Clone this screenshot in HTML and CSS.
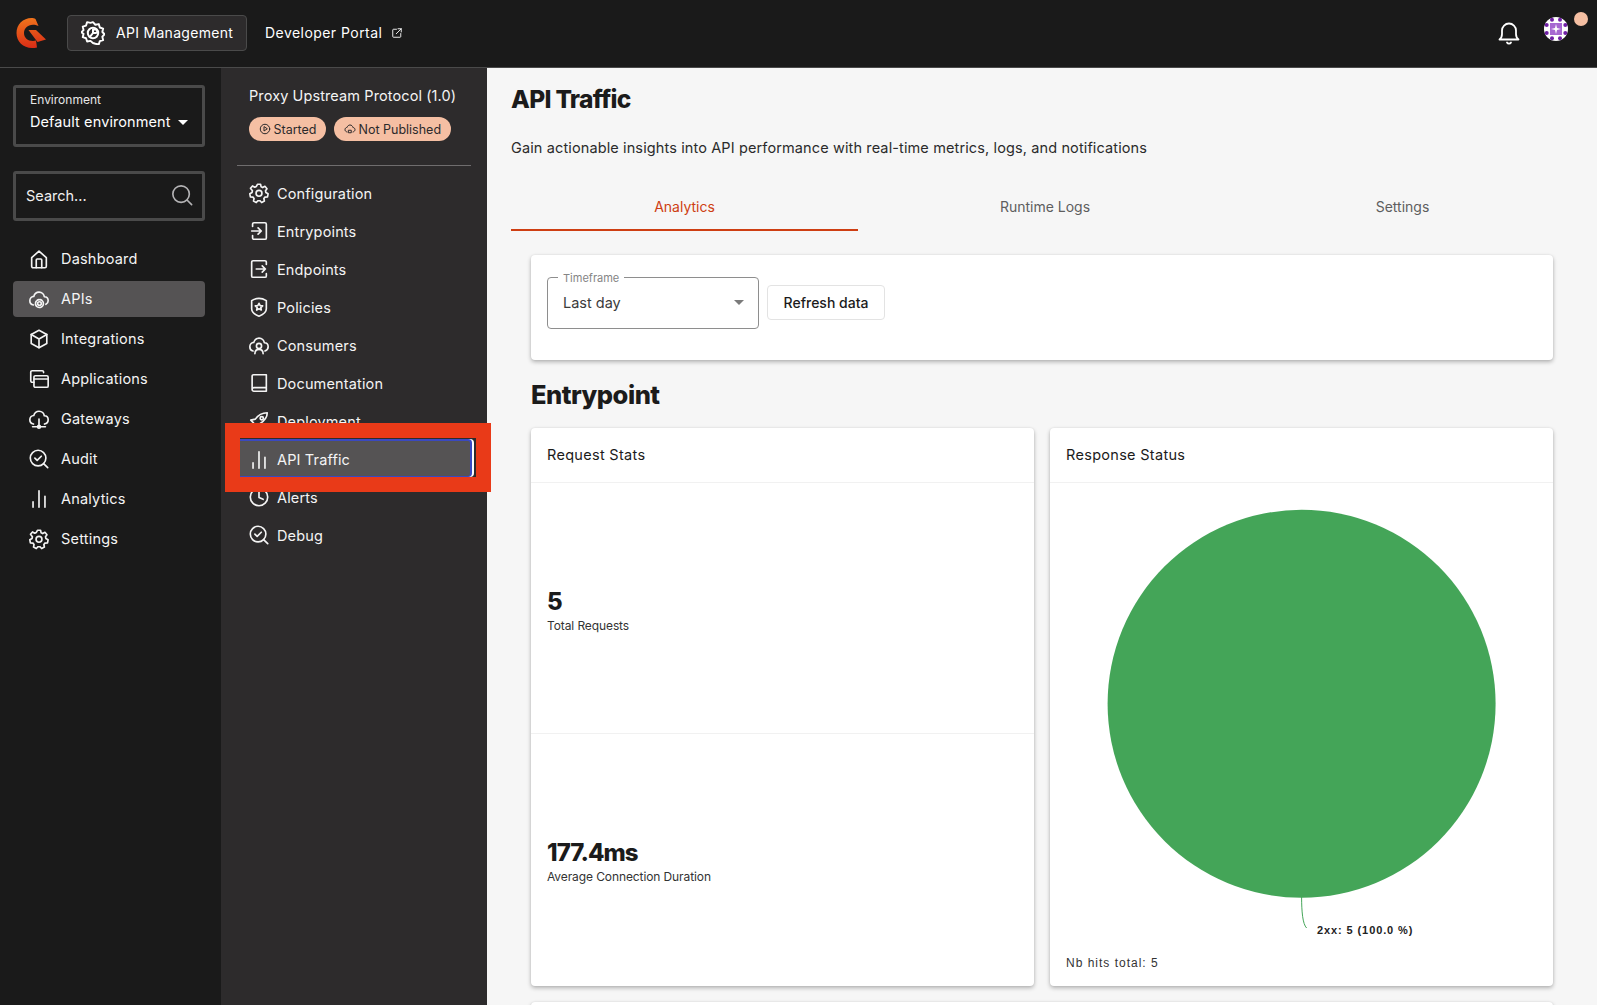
FILE: index.html
```html
<!DOCTYPE html>
<html lang="en">
<head>
<meta charset="utf-8">
<title>API Traffic</title>
<link rel="stylesheet" href="styles.css">
</head>
<body>
<svg class="defs" width="0" height="0" aria-hidden="true">
  <defs>
    <linearGradient id="logo-grad" x1="0.4" y1="0" x2="0.5" y2="1">
      <stop offset="0" stop-color="#f0741c"/>
      <stop offset="1" stop-color="#d92c16"/>
    </linearGradient>
    <symbol id="i-gear" viewBox="0 0 24 24"><path d="M10.300 2.500h3.400l.6 2.800 1.700.8 2.500-1.400 2.200 2.600-1.600 2.300.4 1.900 2.400 1.400-.6 3.300-2.800.3-1.200 1.500.6 2.800-3 1.600-2-2h-1.900l-2 2-3-1.600.6-2.800-1.200-1.500-2.800-.3-.6-3.300 2.400-1.400.4-1.900L2.700 6.900l2.200-2.600 2.500 1.400 1.700-.8z"/><circle cx="12" cy="12.300" r="3.200"/></symbol>
    <symbol id="i-gear-app" viewBox="0 0 24 24"><path d="M12 1.500l2.500 2.700 3.500-.7 1.100 3.500 3.400 1.100-.8 3.600 2.300 2.300-2.300 2.500.8 3.500-3.400 1.100-1.100 3.400-3.500-.7L12 23l-2.500-2.200-3.500.7-1.100-3.400-3.400-1.100.8-3.500L0 12l2.300-2.300-.8-3.600 3.400-1.100L6 1.500l3.500.7z" transform="translate(.3 -.3) scale(.97)"/><circle cx="12" cy="12" r="5.200"/><path d="M12 12V8.500h2.500a1.700 1.700 0 0 1 0 3.500zM12 12l-2.500 3.200"/></symbol>
    <symbol id="i-home" viewBox="0 0 24 24"><path d="M4 10.500 12 3.500l8 7V20a1.500 1.500 0 0 1-1.500 1.500h-13A1.500 1.500 0 0 1 4 20z"/><path d="M9 21.500V13a1 1 0 0 1 1-1h4a1 1 0 0 1 1 1v8.500"/></symbol>
    <symbol id="i-cloud-gear" viewBox="0 0 24 24"><path d="M6 18.500C3.500 18 2 16 2 13.800 2 11 4.200 9.300 6.300 9.200 7.200 6 9.500 4.500 12 4.500c3.300 0 5.500 2.500 5.800 5 2.500.1 4.200 2 4.200 4.300 0 1.800-1 3.200-2.500 4"/><circle cx="12.500" cy="17" r="2"/><circle cx="12.500" cy="17" r="4.300" stroke-dasharray="2.200 1.200"/></symbol>
    <symbol id="i-box" viewBox="0 0 24 24"><path d="M12 2.500 20.500 7v10L12 21.500 3.500 17V7z"/><path d="M3.500 7 12 12l8.500-5M12 12v9.500"/></symbol>
    <symbol id="i-windows" viewBox="0 0 24 24"><rect x="6.500" y="8.500" width="15.500" height="12.500" rx="1.500"/><path d="M17 5V4.500A1.500 1.500 0 0 0 15.500 3h-11A1.500 1.500 0 0 0 3 4.500V14a1.500 1.500 0 0 0 1.500 1.500h2M6.500 12H22"/></symbol>
    <symbol id="i-cloud-net" viewBox="0 0 24 24"><path d="M6 17.500C3.500 17 2 15 2 12.800 2 10 4.200 8.300 6.300 8.200 7.200 5 9.500 3.500 12 3.500c3.300 0 5.500 2.500 5.800 5 2.500.1 4.200 2 4.200 4.300 0 2-1.500 4.200-4 4.700"/><path d="M12 12v6M5 20.500h14"/><circle cx="12" cy="20.500" r="1.500"/></symbol>
    <symbol id="i-audit" viewBox="0 0 24 24"><circle cx="11" cy="11" r="8.500"/><path d="m7.500 11 2.500 2.500 4.500-4.500M17 17l4.500 4.500"/></symbol>
    <symbol id="i-bars" viewBox="0 0 24 24"><path d="M5.500 21v-6M12 21V3M18.500 21V9"/></symbol>
    <symbol id="i-entry" viewBox="0 0 24 24"><path d="M5 7V4.500A1.500 1.500 0 0 1 6.500 3h12A1.500 1.500 0 0 1 20 4.500v15a1.500 1.500 0 0 1-1.500 1.500h-12A1.500 1.500 0 0 1 5 19.500V17"/><path d="M4 12h10M11 8.500l3.500 3.500-3.500 3.500"/></symbol>
    <symbol id="i-end" viewBox="0 0 24 24"><path d="M20 7V4.500A1.500 1.500 0 0 0 18.500 3h-13A1.500 1.500 0 0 0 4 4.500v15A1.500 1.500 0 0 0 5.500 21h13a1.500 1.500 0 0 0 1.500-1.500V17"/><path d="M9 12h10M15.500 8.500 19 12l-3.500 3.500"/></symbol>
    <symbol id="i-shield" viewBox="0 0 24 24"><path d="M4 5c5-3 11-3 16 0v9c0 4-4 6.500-8 8-4-1.500-8-4-8-8z"/><path d="m12 8 1.300 2.500 2.700.3-2 1.800.5 2.700-2.500-1.300-2.500 1.300.5-2.700-2-1.800 2.700-.3z"/></symbol>
    <symbol id="i-cloud-user" viewBox="0 0 24 24"><path d="M5.500 18.500C3.300 18 2 16 2 13.800 2 11 4.200 9.300 6.300 9.200 7.200 6 9.500 4.500 12 4.500c3.300 0 5.500 2.500 5.800 5 2.500.1 4.200 2 4.200 4.300 0 2-1.200 3.800-3.500 4.700"/><circle cx="12" cy="13" r="2.800"/><path d="M7.500 21.500c0-3 1.800-4.800 4.500-4.800s4.500 1.800 4.500 4.800"/></symbol>
    <symbol id="i-book" viewBox="0 0 24 24"><path d="M4.500 19V4.500A1.500 1.500 0 0 1 6 3h14v18H6.500a2 2 0 0 1-2-2 2 2 0 0 1 2-2H20"/></symbol>
    <symbol id="i-rocket" viewBox="0 0 24 24"><path d="M21 3c-6 0-10 2.500-13 7l-5 1 3 3-1 4 4-1 3 3 1-5c4.500-3 8-7 8-12z"/><circle cx="15" cy="9" r="1.800"/></symbol>
    <symbol id="i-clock" viewBox="0 0 24 24"><circle cx="12" cy="12" r="9.500"/><path d="M12 6v6.500l4.500 2"/></symbol>
    <symbol id="i-search" viewBox="0 0 24 24"><circle cx="11" cy="11" r="9"/><path d="m18 18 4.500 4.500"/></symbol>
    <symbol id="i-play" viewBox="0 0 24 24"><circle cx="12" cy="12" r="9.500"/><path d="M10 8v8l6-4z"/></symbol>
    <symbol id="i-cloud-off" viewBox="0 0 24 24"><path d="M6 18C3.500 17.500 2 15.500 2 13.300 2 10.500 4.200 8.800 6.300 8.700 7.200 5.500 9.500 4 12 4c3.300 0 5.500 2.500 5.800 5 2.500.1 4.200 2 4.200 4.300 0 2-1.500 4.200-4 4.700"/><path class="fill" d="M9.500 14.500h5v5h-5z"/></symbol>
    <symbol id="i-ext" viewBox="0 0 24 24"><path d="M11 4.500H5A1.500 1.500 0 0 0 3.500 6v13A1.500 1.500 0 0 0 5 20.500h13a1.500 1.500 0 0 0 1.500-1.500v-6M10.500 13.500 20.500 3.500M14 3.500h6.500V10"/></symbol>
    <symbol id="i-bell" viewBox="0 0 24 24"><path d="M2.500 18.500c2-1.500 2.500-3 2.500-5.500V9.500a7 7 0 0 1 14 0V13c0 2.500.5 4 2.500 5.500z"/><path d="M10 21.500a2.300 2.300 0 0 0 4 0"/></symbol>
  </defs>
</svg>

<header class="topbar">
  <svg class="logo" viewBox="0 0 30 30" aria-hidden="true"><path fill="url(#logo-grad)" d="M19.500 1 22.500 8C20.500 7 19 6.700 17 6.700 11.500 6.700 8 10.500 8 15c0 4.500 3.500 8 9 8 1 0 2-.1 3-.4l1 6.900c-1.500.4-3 .5-5 .5C7 30 .5 23.500.5 15S7 0 15.500 0c1.500 0 3 .4 4 1zM12.500 12H20l10 9.500-8.500 2.500z"/></svg>
  <div class="product">
    <svg class="ico ico-24 app-gear"><use href="#i-gear-app"/></svg>
    <span>API Management</span>
  </div>
  <div class="portal">
    <span>Developer Portal</span>
    <svg class="ico ico-12"><use href="#i-ext"/></svg>
  </div>
  <div class="top-right">
    <svg class="ico ico-24 bell"><use href="#i-bell"/></svg>
    <svg class="avatar" viewBox="0 0 24 24" aria-hidden="true">
      <circle cx="12" cy="12" r="12" fill="#fff"/>
      <rect x="6" y="6" width="12" height="12" fill="#a667d1"/>
      <g fill="#6f1fa5"><circle cx="8" cy="2.700" r="2"/><circle cx="16" cy="2.700" r="2"/><circle cx="8" cy="21.300" r="2"/><circle cx="16" cy="21.300" r="2"/><circle cx="2.700" cy="8" r="2"/><circle cx="2.700" cy="16" r="2"/><circle cx="21.300" cy="8" r="2"/><circle cx="21.300" cy="16" r="2"/></g>
      <path fill="#fff" d="M12 7l1 4 4 1-4 1-1 4-1-4-4-1 4-1z"/>
    </svg>
    <span class="dot"></span>
  </div>
</header>

<div class="shell">
  <nav class="side">
    <div class="box env">
      <div class="env-label">Environment</div>
      <div class="env-value"><span>Default environment</span><i class="caret caret-white"></i></div>
    </div>
    <div class="box search">
      <span>Search...</span>
      <svg class="ico ico-22 muted"><use href="#i-search"/></svg>
    </div>
    <ul class="side-list">
      <li class="side-item"><svg class="ico ico-22"><use href="#i-home"/></svg>Dashboard</li>
      <li class="side-item is-active"><svg class="ico ico-22"><use href="#i-cloud-gear"/></svg>APIs</li>
      <li class="side-item"><svg class="ico ico-22"><use href="#i-box"/></svg>Integrations</li>
      <li class="side-item"><svg class="ico ico-22"><use href="#i-windows"/></svg>Applications</li>
      <li class="side-item"><svg class="ico ico-22"><use href="#i-cloud-net"/></svg>Gateways</li>
      <li class="side-item"><svg class="ico ico-22"><use href="#i-audit"/></svg>Audit</li>
      <li class="side-item"><svg class="ico ico-22"><use href="#i-bars"/></svg>Analytics</li>
      <li class="side-item"><svg class="ico ico-22"><use href="#i-gear"/></svg>Settings</li>
    </ul>
  </nav>

  <aside class="sub">
    <div class="sub-head">
      <div class="api-name">Proxy Upstream Protocol (1.0)</div>
      <div class="chips">
        <span class="chip"><svg class="ico ico-12"><use href="#i-play"/></svg>Started</span>
        <span class="chip"><svg class="ico ico-12"><use href="#i-cloud-off"/></svg>Not Published</span>
      </div>
    </div>
    <ul class="sub-list">
      <li class="sub-item"><svg class="ico ico-22"><use href="#i-gear"/></svg>Configuration</li>
      <li class="sub-item"><svg class="ico ico-22"><use href="#i-entry"/></svg>Entrypoints</li>
      <li class="sub-item"><svg class="ico ico-22"><use href="#i-end"/></svg>Endpoints</li>
      <li class="sub-item"><svg class="ico ico-22"><use href="#i-shield"/></svg>Policies</li>
      <li class="sub-item"><svg class="ico ico-22"><use href="#i-cloud-user"/></svg>Consumers</li>
      <li class="sub-item"><svg class="ico ico-22"><use href="#i-book"/></svg>Documentation</li>
      <li class="sub-item"><svg class="ico ico-22"><use href="#i-rocket"/></svg>Deployment</li>
      <li class="sub-item highlight">
        <span class="sub-current"><svg class="ico ico-22"><use href="#i-bars"/></svg>API Traffic</span>
      </li>
      <li class="sub-item"><svg class="ico ico-22"><use href="#i-clock"/></svg>Alerts</li>
      <li class="sub-item"><svg class="ico ico-22"><use href="#i-audit"/></svg>Debug</li>
    </ul>
  </aside>

  <main class="main">
    <h1 class="title">API Traffic</h1>
    <p class="lede">Gain actionable insights into API performance with real-time metrics, logs, and notifications</p>
    <div class="tabs">
      <div class="tab is-on">Analytics</div>
      <div class="tab">Runtime Logs</div>
      <div class="tab">Settings</div>
    </div>
    <section class="content">
      <div class="card filters">
        <div class="select">
          <span class="select-label">Timeframe</span>
          <span>Last day</span>
          <i class="caret caret-grey"></i>
        </div>
        <button class="refresh" type="button">Refresh data</button>
      </div>
      <h2 class="section">Entrypoint</h2>
      <div class="grid">
        <div class="card panel">
          <div class="panel-head">Request Stats</div>
          <div class="stat">
            <div class="stat-value">5</div>
            <div class="stat-label">Total Requests</div>
          </div>
          <div class="stat stat-sep">
            <div class="stat-value">177.4ms</div>
            <div class="stat-label">Average Connection Duration</div>
          </div>
        </div>
        <div class="card panel">
          <div class="panel-head">Response Status</div>
          <div class="chart">
            <svg class="pie" viewBox="0 0 503 473" aria-hidden="true">
              <circle cx="251.600" cy="220.800" r="194" fill="#44a558"/>
              <path d="M251.600 414c0 14 1 27 5 31" fill="none" stroke="#44a558" stroke-width="1"/>
            </svg>
            <span class="pie-label">2xx: 5 (100.0 %)</span>
            <span class="pie-total">Nb hits total: 5</span>
          </div>
        </div>
      </div>
      <div class="card next"></div>
    </section>
  </main>
</div>
</body>
</html>
```
FILE: styles.css
```css
* { box-sizing: border-box; }
html, body { height: 100%; }
body {
  margin: 0;
  height: 1005px;
  overflow: hidden;
  background: #f6f6f6;
  color: #1b1b1b;
  font-family: Inter, "Noto Sans", sans-serif;
  font-size: 14px;
  display: flex;
  flex-direction: column;
}
.defs { position: absolute; }
ul { list-style: none; margin: 0; padding: 0; }

.ico { fill: none; stroke: currentColor; stroke-width: 1.8; stroke-linecap: round; stroke-linejoin: round; flex: none; }
.ico-12 { width: 12px; height: 12px; }
.ico-22 { width: 22px; height: 22px; }
.ico-24 { width: 24px; height: 24px; }
.muted { color: #b4b3b5; }

.topbar {
  height: 68px;
  flex: none;
  display: flex;
  align-items: center;
  background: #1a1a1a;
  color: #fff;
  border-bottom: 1px solid #4a4a4a;
  padding: 0 0 1px 16px;
}
.logo { width: 30px; height: 30px; flex: none; }
.product {
  margin-left: 21px;
  height: 36px;
  width: 180px;
  padding: 0 0 1px 13px;
  display: flex;
  align-items: center;
  gap: 11px;
  background: #2d2b2c;
  border: 1px solid #4a4a4a;
  border-radius: 4px;
  font-size: 14px;
  letter-spacing: .3px;
  white-space: nowrap;
}
.app-gear { stroke-width: 2; }
.portal {
  margin-left: 18px;
  padding-bottom: 1px;
  display: flex;
  align-items: center;
  gap: 9px;
  letter-spacing: .45px;
}
.top-right { margin-left: auto; display: flex; align-items: center; position: relative; width: 120px; height: 100%; }
.bell { margin-left: 20px; }
.avatar { width: 24px; height: 24px; margin-left: 23px; align-self: flex-start; margin-top: 17px; }
.dot { position: absolute; left: 97px; top: 12px; width: 14px; height: 14px; border-radius: 50%; background: #f5bfa3; }

.shell { flex: 1; min-height: 0; display: flex; }
.side { width: 221px; flex: none; background: #1a1a1a; color: #fff; padding: 17px 16px 0 13px; }
.box { border: 3px solid #4a4a4a; border-radius: 3px; }
.env { height: 62px; padding: 3px 14px; }
.env-label { font-size: 12px; color: #e8e8e8; line-height: 18px; }
.env-value { font-size: 14.5px; line-height: 24px; display: flex; align-items: center; gap: 7px; white-space: nowrap; margin-top: 1px; letter-spacing: .1px; }
.caret { display: block; width: 0; height: 0; border-left: 5px solid transparent; border-right: 5px solid transparent; }
.caret-white { border-top: 5px solid #fff; }
.caret-grey { border-top: 5px solid #7b7b7b; margin-left: auto; margin-right: -1px; }
.search { height: 50px; margin-top: 24px; padding: 0 9px 2px 10px; display: flex; align-items: center; justify-content: space-between; font-size: 14.5px; color: #f0f0f0; }
.side-list { margin-top: 20px; display: flex; flex-direction: column; gap: 4px; }
.side-item { height: 36px; padding: 0 0 1px 15px; display: flex; align-items: center; gap: 11px; border-radius: 4px; font-size: 14.5px; color: #f4f4f4; letter-spacing: .2px; }
.is-active { background: #555354; }

.sub { width: 266px; flex: none; background: #2d2b2c; color: #f4f4f4; padding-top: 18px; }
.sub-head { margin: 0 16px; padding: 0 12px 24px; border-bottom: 1px solid #6f6d6e; }
.api-name { font-size: 14.5px; line-height: 20px; letter-spacing: .1px; white-space: nowrap; }
.chips { display: flex; gap: 8px; margin-top: 11px; }
.chip { height: 24px; padding: 0 9.5px; display: flex; align-items: center; gap: 3px; border-radius: 12px; background: #f5bfa3; color: #2c2a2b; font-size: 12.5px; white-space: nowrap; }
.chip .ico { stroke-width: 2; }
.chip .fill { fill: currentColor; }
.sub-list { margin-top: 8px; }
.sub-item { height: 38px; padding-left: 27px; display: flex; align-items: center; gap: 7px; font-size: 14.5px; letter-spacing: .15px; }
.highlight { position: relative; padding: 0; }
.highlight::before { content: ""; position: absolute; left: 4px; right: -4px; top: -17px; bottom: -14px; border: 15px solid #e93a18; }
.sub-current {
  position: relative;
  top: -1px;
  margin-left: 19px;
  width: 232px;
  height: 38px;
  padding: 2px 0 0 8px;
  display: flex;
  align-items: center;
  gap: 7px;
  background: #555354;
  border-top: 2px solid #3a49c0;
  border-bottom: 1px solid #3a49c0;
  border-right: 2px solid #3a49c0;
  border-radius: 0 4px 4px 0;
  box-shadow: 2px 0 0 #fff;
}

.main { flex: 1; min-width: 0; padding: 0 24px; }
.title { margin: 15px 0 0; font-size: 24.5px; line-height: 32px; font-weight: 800; letter-spacing: -.7px; }
.lede { margin: 23px 0 0; font-size: 14.5px; line-height: 20px; color: #2b2b2b; white-space: nowrap; letter-spacing: .12px; }
.tabs { margin-top: 25px; display: grid; grid-template-columns: 347px 374px 1fr; height: 48px; }
.tab { display: flex; align-items: center; justify-content: center; font-size: 14px; color: #5e5e5e; border-bottom: 2px solid transparent; }
.is-on { color: #ce3e12; border-bottom-color: #ce3e12; }

.content { padding: 24px 20px 0; }
.card { background: #fff; border-radius: 4px; box-shadow: 0 2px 4px rgba(0,0,0,.28), 0 0 2px rgba(0,0,0,.08); }
.filters { height: 105px; padding: 22px 16px; display: flex; align-items: flex-start; gap: 8px; }
.select { position: relative; width: 212px; height: 52px; padding: 0 15px 1px; display: flex; align-items: center; border: 1px solid #8e8e8e; border-radius: 4px; font-size: 14.5px; color: #3b3b3b; }
.select-label { position: absolute; left: 10px; top: -6px; padding: 0 5px; background: #fff; font-size: 11px; line-height: 12px; color: #858585; }
.refresh { margin-top: 8px; width: 118px; height: 35px; padding: 0; background: #fff; border: 1px solid #e3e3e3; border-radius: 4px; color: #1b1b1b; font: 500 14px Inter, sans-serif; }
.section { margin: 19px 0 17px; font-size: 25.5px; line-height: 32px; font-weight: 800; letter-spacing: -.5px; }
.grid { display: grid; grid-template-columns: 1fr 1fr; gap: 16px; }
.panel { height: 558px; display: flex; flex-direction: column; }
.panel-head { height: 55px; flex: none; padding: 0 16px 2px; display: flex; align-items: center; font-size: 14.5px; letter-spacing: .3px; border-bottom: 1px solid #f1f1f1; }
.stat { height: 250px; padding: 6px 16px 0; display: flex; flex-direction: column; justify-content: center; }
.stat-sep { border-top: 1px solid #f1f1f1; }
.stat-value { font-size: 24px; line-height: 30px; font-weight: 800; letter-spacing: -.95px; }
.stat-label { font-size: 12px; line-height: 18px; color: #333; letter-spacing: -.1px; }
.chart { position: relative; flex: 1; }
.pie { display: block; width: 503px; height: 473px; }
.pie-label { position: absolute; left: 267px; top: 441px; font: 700 11px "Liberation Sans", sans-serif; color: #222; letter-spacing: .9px; }
.pie-total { position: absolute; left: 16px; top: 473px; font: 12px "Liberation Sans", sans-serif; color: #333; letter-spacing: 1px; }
.next { height: 40px; margin-top: 16px; }
```
